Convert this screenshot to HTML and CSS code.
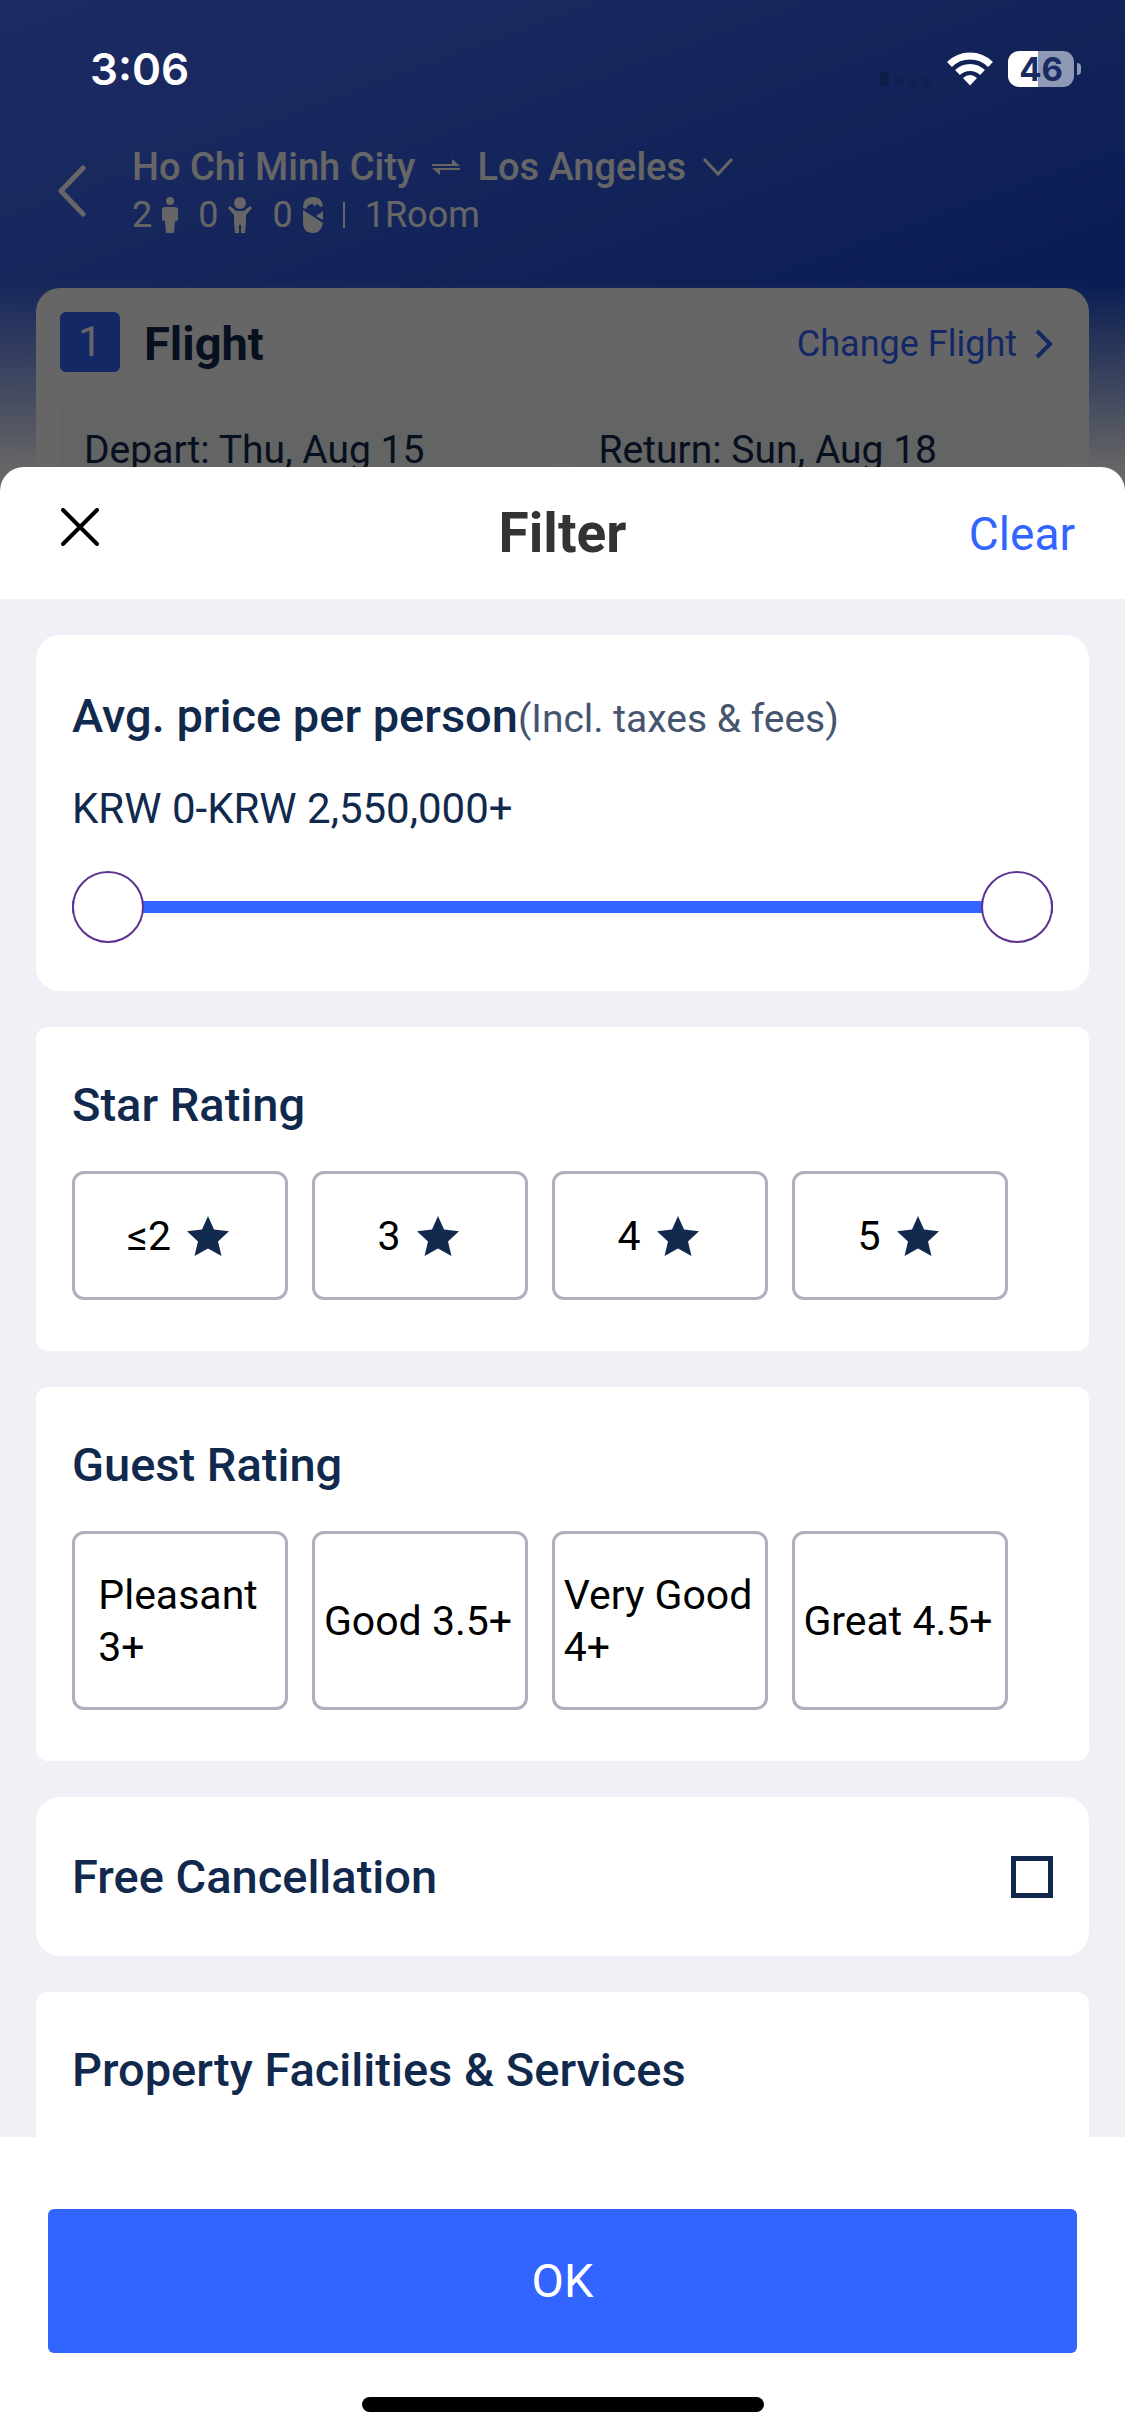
FILE: index.html
```html
<!DOCTYPE html>
<html lang="en">
<head>
<meta charset="utf-8">
<meta name="viewport" content="width=device-width, initial-scale=1">
<title>Filter</title>
<link rel="stylesheet" href="styles.css">
</head>
<body>
<svg class="defs" aria-hidden="true">
  <symbol id="star" viewBox="0 0 42 40"><path d="M21 0l6 13.500 15 1.700-11 10.300 3.500 14.500L21 32.500 7.500 40 11 25.500 0 15.200l15-1.700z"/></symbol>
</svg>

<div class="app">
  <header class="trip">
    <a class="back" href="#" aria-label="Back"><svg width="28" height="52" viewBox="0 0 28 52" fill="none" stroke="currentColor" stroke-width="5" stroke-linecap="round" stroke-linejoin="round"><path d="M25 3L3 26l22 23"/></svg></a>
    <div class="trip-info">
      <div class="route">
        <span>Ho Chi Minh City</span>
        <svg class="swap" width="28" height="16" viewBox="0 0 28 16" fill="currentColor"><path d="M0 5h20V0l8 7H0zM28 9H0l8 7v-5h20z"/></svg>
        <span>Los Angeles</span>
        <svg class="down" width="32" height="20" viewBox="0 0 32 20" fill="none" stroke="currentColor" stroke-width="3"><path d="M2 2l14 15L30 2"/></svg>
      </div>
      <div class="guests">
        <span class="guest">2<svg width="16" height="36" viewBox="0 0 16 36" fill="currentColor"><circle cx="8" cy="4" r="4"/><path d="M3 10h10q3 0 3 3v9q0 2-2 2h-1l-1 12H4L3 24H2q-2 0-2-2v-9q0-3 3-3z"/></svg></span>
        <span class="guest">0<svg width="24" height="36" viewBox="0 0 24 36" fill="currentColor"><circle cx="12" cy="6" r="6"/><path d="M2 9l6 5h8l6-5 2 2-6 7v7l-1 11h-4v-8h-2v8H7L6 25v-7L0 11z"/></svg></span>
        <span class="guest">0<svg width="20" height="36" viewBox="0 0 20 36" fill="currentColor"><path d="M0 11Q0 0 10 0q9 0 10 9l-3 1q-1-3-4-3l-1 3-2-3Q5 7 3 12z"/><path d="M0 13l20 13q-2 10-10 10Q0 36 0 25zM20 14v9l-7-4z"/></svg></span>
        <span class="bar"></span>
        <span>1Room</span>
      </div>
    </div>
  </header>
  <section class="flight">
    <div class="flight-head">
      <span class="step">1</span>
      <h2>Flight</h2>
      <a href="#">Change Flight<svg width="18" height="30" viewBox="0 0 18 30" fill="none" stroke="currentColor" stroke-width="4"><path d="M2 2l13 13L2 28"/></svg></a>
    </div>
    <div class="legs">
      <div class="leg">Depart: Thu, Aug 15</div>
      <div class="leg">Return: Sun, Aug 18</div>
    </div>
  </section>
</div>
<div class="scrim"></div>

<div class="status">
  <time>3:06</time>
  <div class="status-icons">
    <svg width="52" height="34" viewBox="0 0 52 34" fill="#101c48"><rect y="20" width="9" height="14" rx="3"/><g opacity=".4"><rect x="14" y="25" width="9" height="9" rx="3"/><rect x="28" y="25" width="9" height="9" rx="3"/><rect x="42" y="25" width="9" height="9" rx="3"/></g></svg>
    <svg width="46" height="34" viewBox="0 0 46 34"><g fill="none" stroke="#fff" stroke-width="7"><path d="M2.500 12.500a29 29 0 0 1 41 0"/><path d="M10.500 20.500a18 18 0 0 1 25 0"/></g><path d="M16 26q7-6 14 0l-7 7.500z" fill="#fff"/></svg>
    <div class="battery"><span>46</span></div>
  </div>
</div>

<main class="sheet">
  <header class="sheet-head">
    <button class="close" type="button" aria-label="Close"><svg width="38" height="38" viewBox="0 0 38 38" fill="none" stroke="currentColor" stroke-width="4" stroke-linecap="round"><path d="M2 2l34 34M36 2L2 36"/></svg></button>
    <h1>Filter</h1>
    <button class="clear" type="button">Clear</button>
  </header>

  <div class="sheet-body">
    <section class="card card-round">
      <h2>Avg. price per person<small>(Incl. taxes &amp; fees)</small></h2>
      <output class="price">KRW 0-KRW 2,550,000+</output>
      <div class="slider">
        <input type="range" min="0" max="2550000" value="0" aria-label="Minimum price">
        <input type="range" min="0" max="2550000" value="2550000" aria-label="Maximum price">
      </div>
    </section>

    <section class="card">
      <h2>Star Rating</h2>
      <div class="options stars">
        <button type="button">≤2<svg width="42" height="40"><use href="#star"/></svg></button>
        <button type="button">3<svg width="42" height="40"><use href="#star"/></svg></button>
        <button type="button">4<svg width="42" height="40"><use href="#star"/></svg></button>
        <button type="button">5<svg width="42" height="40"><use href="#star"/></svg></button>
      </div>
    </section>

    <section class="card">
      <h2>Guest Rating</h2>
      <div class="options guest-rating">
        <button type="button"><span>Pleasant<br>3+</span></button>
        <button type="button"><span>Good 3.5+</span></button>
        <button type="button"><span>Very Good<br>4+</span></button>
        <button type="button"><span>Great 4.5+</span></button>
      </div>
    </section>

    <section class="card card-round check-row">
      <h2><label for="free">Free Cancellation</label></h2>
      <input id="free" type="checkbox">
    </section>

    <section class="card">
      <h2>Property Facilities &amp; Services</h2>
    </section>
  </div>

  <footer class="sheet-foot">
    <button class="ok" type="button">OK</button>
    <div class="home"></div>
  </footer>
</main>
</body>
</html>
```
FILE: styles.css
```css
:root {
  --blue: #3264ff;
  --navy: #10294d;
  --line: #adb1bf;
  --font: Roboto, "Noto Sans", "Liberation Sans", sans-serif;
}

* { box-sizing: border-box; }

body {
  position: relative;
  display: flex;
  flex-direction: column;
  height: 100vh;
  margin: 0;
  font: 42px/52px var(--font);
  color: var(--navy);
  overflow: hidden;
}

h1, h2 { margin: 0; font-size: 47px; font-weight: 500; line-height: 60px; }
button { padding: 0; border: 0; background: none; font: inherit; color: inherit; }
svg { flex: none; }
a { color: inherit; text-decoration: none; }
.defs { position: absolute; width: 0; height: 0; }

/* Trip page behind the sheet */
.app {
  position: absolute;
  inset: 0;
  padding: 138px 36px 0;
  background:
    linear-gradient(to bottom, transparent 280px, #fff 470px),
    linear-gradient(160deg, #456bf5 0, #3e66ec 200px, #2c56dc 420px, #1748d0 650px);
}
.scrim { position: absolute; inset: 0; background: rgba(0, 0, 0, .6); }

.trip { display: flex; align-items: center; gap: 46px; height: 150px; padding: 0 22px 44px; color: #fff; }
.back { display: flex; }
.trip-info { display: flex; flex-direction: column; }
.route, .guests { display: flex; align-items: center; height: 48px; font-size: 38px; line-height: 48px; }
.route { font-weight: 500; }
.swap { margin: 0 17px; }
.down { margin-left: 16px; }
.guests { gap: 20px; font-size: 36px; }
.guest { display: flex; align-items: center; gap: 10px; }
.bar { width: 2px; height: 26px; background: currentColor; }

.flight { height: 400px; padding: 24px; border-radius: 24px; background: #fff; }
.flight-head { display: flex; align-items: center; height: 60px; }
.step { width: 60px; height: 60px; border-radius: 6px; background: var(--blue); color: #fff; text-align: center; line-height: 60px; }
.flight-head h2 { margin-left: 24px; padding-top: 4px; font-weight: 700; }
.flight-head a { display: flex; align-items: center; gap: 18px; margin-left: auto; padding: 4px 12px 0 0; font-size: 36px; color: var(--blue); }
.legs { display: grid; grid-template-columns: 1fr 1fr; gap: 24px; margin-top: 30px; }
.leg { height: 200px; padding: 22px 24px; border-radius: 6px; background: #f7f9fb; font-size: 39px; }

/* System status bar */
.status { position: relative; display: flex; flex: none; justify-content: space-between; height: 138px; padding: 42px 44px 0 90px; color: #fff; }
.status time { font: 600 44px/54px Inter, sans-serif; }
.status-icons { display: flex; align-items: center; height: 54px; gap: 15px; }
.battery {
  position: relative;
  width: 66px;
  height: 36px;
  margin-right: 7px;
  border-radius: 11px;
  background: linear-gradient(to right, #fff 45%, #8f98b5 45%);
  color: #1a2b64;
  font: 700 33px/36px Inter, sans-serif;
  text-align: center;
}
.battery::after { content: ""; position: absolute; right: -7px; top: 12px; width: 4px; height: 12px; border-radius: 0 4px 4px 0; background: #8f98b5; }

/* Filter sheet */
.sheet {
  position: relative;
  display: flex;
  flex: 1;
  flex-direction: column;
  min-height: 0;
  margin-top: 329px;
  border-radius: 24px 24px 0 0;
  background: #fff;
}
.sheet-head { display: grid; grid-template-columns: 1fr auto 1fr; align-items: center; flex: none; height: 132px; padding: 0 50px; }
.sheet-head h1 { color: #333; font-size: 55px; font-weight: 700; }
.close { display: flex; justify-self: start; padding: 0 0 12px 11px; color: #000; }
.clear { justify-self: end; padding-top: 2px; font-size: 46px; color: var(--blue); }

.sheet-body {
  display: flex;
  flex: 1;
  flex-direction: column;
  gap: 36px;
  min-height: 0;
  padding: 36px;
  overflow: hidden auto;
  scrollbar-width: none;
  background: #f0f1f6;
}
.card { flex: none; padding: 48px 36px 51px; border-radius: 12px; background: #fff; }
.card-round { padding: 51px 36px 48px; border-radius: 24px; }
.card small { font-size: 39px; font-weight: 400; color: #45556f; }
.price { display: block; margin-top: 34px; }

.slider {
  display: grid;
  height: 72px;
  margin-top: 36px;
  background: linear-gradient(var(--blue), var(--blue)) center / 100% 12px no-repeat;
}
.slider input {
  grid-area: 1 / 1;
  width: 100%;
  height: 72px;
  margin: 0;
  appearance: none;
  background: none;
  pointer-events: none;
}
.slider input::-webkit-slider-thumb {
  width: 72px;
  height: 72px;
  border: 2px solid #5e3290;
  border-radius: 50%;
  background: #fff;
  appearance: none;
  pointer-events: auto;
}

.options { display: grid; grid-template-columns: repeat(4, 216px); gap: 24px; margin-top: 36px; }
.options button {
  display: flex;
  align-items: center;
  justify-content: center;
  gap: 16px;
  padding-right: 4px;
  border: 3px solid var(--line);
  border-radius: 12px;
  color: #000;
  font-size: 41px;
  white-space: nowrap;
}
.options svg { fill: var(--navy); }
.stars button { height: 129px; }
.guest-rating button { height: 179px; text-align: left; }

.check-row { display: flex; align-items: center; justify-content: space-between; height: 159px; padding-block: 0; }
.check-row input { width: 42px; height: 42px; margin: 0; border: 5px solid var(--navy); appearance: none; }
.check-row input:checked { background: var(--blue); }

.sheet-foot { display: flex; flex: none; flex-direction: column; align-items: center; padding: 72px 48px 24px; }
.ok { width: 100%; height: 144px; border-radius: 6px; background: var(--blue); color: #fff; font-size: 47px; }
.home { width: 402px; height: 15px; margin-top: 44px; border-radius: 8px; background: #000; }
```
